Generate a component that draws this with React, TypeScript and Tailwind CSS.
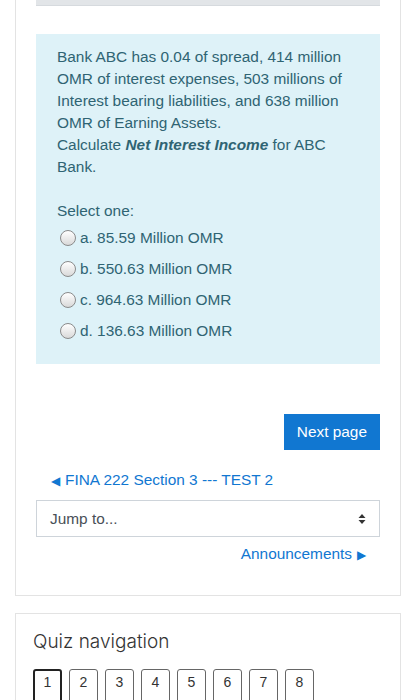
export default function App() {
  const options = [
    'a. 85.59 Million OMR',
    'b. 550.63 Million OMR',
    'c. 964.63 Million OMR',
    'd. 136.63 Million OMR',
  ];

  return (
    <div
      className="w-[416px] h-[700px] overflow-hidden bg-white text-[15.4px]"
      style={{ fontFamily: '"Liberation Sans", Arial, sans-serif' }}
    >
      {/* Question card */}
      <div className="mx-[15px] -mt-[20px] border border-[#e3e3e3] bg-white px-[20px]">
        <div className="h-[25px] bg-[#e2e5e8] border-b border-[#d6dade]" />

        <div className="mt-[28px] bg-[#def2f8] px-[21px] pt-[12px] pb-[22px] text-[#2f6473]">
          <p className="leading-[22px]">
            Bank ABC has 0.04 of spread, 414 million OMR of interest expenses, 503 millions of
            Interest bearing liabilities, and 638 million OMR of Earning Assets.
            <br />
            Calculate <b className="italic">Net Interest Income</b> for ABC Bank.
          </p>

          <p className="mt-[22px] leading-[22px]">Select one:</p>
          <div className="mt-[5px] flex flex-col gap-[9px]">
            {options.map((o) => (
              <div key={o} className="flex items-center h-[22px] pl-[3px]">
                <span className="w-[16px] h-[16px] rounded-full border border-[#8a8a8a] bg-gradient-to-b from-white to-[#d9d9d9] mr-[4px]" />
                <span>{o}</span>
              </div>
            ))}
          </div>
        </div>

        <div className="mt-[50px] flex justify-end">
          <button className="h-[36px] px-[13px] bg-[#1177d1] text-white">
            Next page
          </button>
        </div>

        <div className="mt-[20px] pl-[15px] text-[#1177d1] leading-[20px]">
          <span className="text-[12px] mr-[5px]">◀</span>FINA 222 Section 3 --- TEST 2
        </div>

        <div className="mt-[9px] h-[37px] border border-[#ced4da] flex items-center justify-between px-[13px] text-[#495057]">
          <span>Jump to...</span>
          <svg width="8" height="12" viewBox="0 0 8 12">
            <path d="M4 1 L7.5 5 H0.5 Z M4 11 L0.5 7 H7.5 Z" fill="#333" />
          </svg>
        </div>

        <div className="mt-[7px] pr-[14px] text-right text-[#1177d1] leading-[20px]">
          Announcements<span className="text-[12px] ml-[5px]">▶</span>
        </div>

        <div className="h-[30px]" />
      </div>

      {/* Quiz navigation */}
      <div className="mx-[15px] mt-[17px] border border-[#e3e3e3] bg-white px-[17px] pt-[15px] pb-[20px]">
        <h3
          className="text-[19px] text-[#333] leading-[26px]"
          style={{ fontFamily: 'Inter, "Liberation Sans", sans-serif', fontWeight: 300 }}
        >
          Quiz navigation
        </h3>
        <div className="mt-[14px] flex gap-[7px]">
          {[1, 2, 3, 4, 5, 6, 7, 8].map((n) => (
            <div
              key={n}
              className={
                n === 1
                  ? 'w-[29px] h-[40px] rounded-[3px] border-2 border-[#222] flex justify-center pt-[1px] text-[14px] text-[#333]'
                  : 'w-[29px] h-[40px] rounded-[3px] border border-[#666] flex justify-center pt-[2px] text-[14px] text-[#333]'
              }
            >
              {n}
            </div>
          ))}
        </div>
      </div>
    </div>
  );
}
